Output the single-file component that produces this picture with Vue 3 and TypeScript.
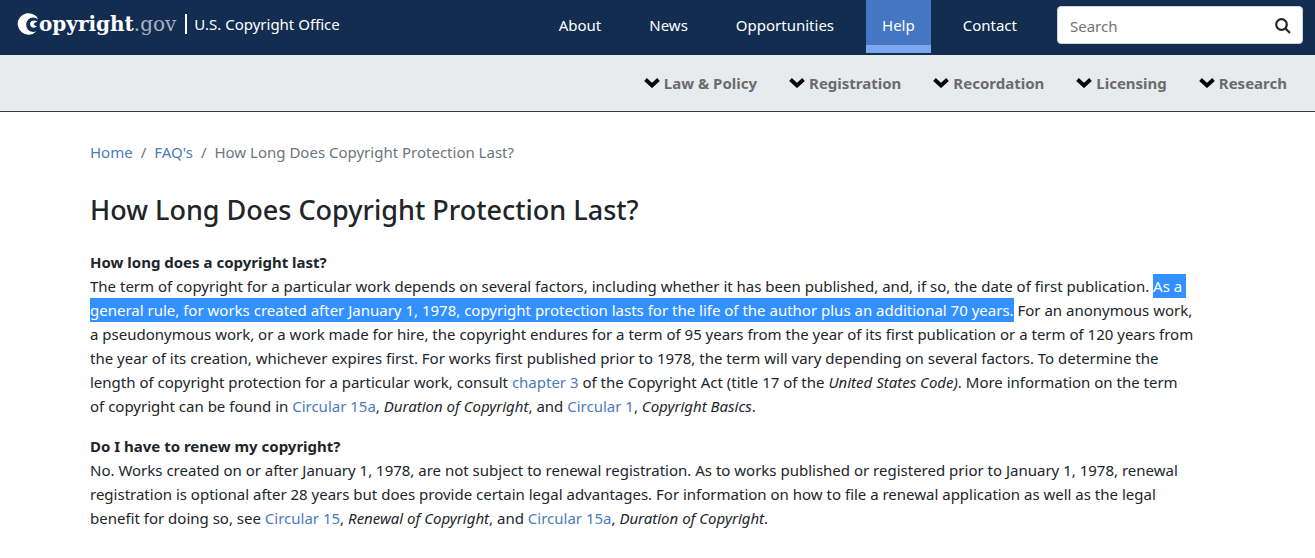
<script setup lang="ts">
interface NavItem {
  label: string
  active?: boolean
}

const mainNav: NavItem[] = [
  { label: 'About' },
  { label: 'News' },
  { label: 'Opportunities' },
  { label: 'Help', active: true },
  { label: 'Contact' },
]

const subNav: string[] = ['Law & Policy', 'Registration', 'Recordation', 'Licensing', 'Research']
</script>

<template>
  <div class="page">
    <header class="topbar">
      <a class="brand" href="#">
        <span class="wordmark">
          <svg class="mark" viewBox="0 0 22 22" aria-hidden="true">
            <path d="M19.500 18.300A10.800 10.800 0 1 1 17.500 2C19 2.800 20.500 4.500 21 6.500C18.500 3.800 14 3.600 11.300 6.500C8.300 9.700 8.700 15 12 17.600C14.300 19.400 17.300 19.300 19.500 18.300Z" fill="#fff" />
            <path d="M20.500 8.500C18 6.700 13 7.200 13 11.100C13 15 17.500 15.600 20 13.600L18 12.400C16.500 12.300 16.500 10 18 9.800Z" fill="#fff" />
          </svg>
          <span class="word">opyright</span><span class="gov">.gov</span>
        </span>
        <span class="divider"></span>
        <span class="office">U.S. Copyright Office</span>
      </a>
      <nav class="main-nav" aria-label="Main">
        <a v-for="item in mainNav" :key="item.label" href="#" :class="{ active: item.active }">{{ item.label }}</a>
      </nav>
      <form class="search" role="search" @submit.prevent>
        <input type="text" placeholder="Search" aria-label="Search" />
        <button type="submit" aria-label="Submit search">
          <svg viewBox="0 0 16 16" aria-hidden="true">
            <circle cx="6.500" cy="6.500" r="5.300" />
            <path d="M10.500 10.500L15 15" />
          </svg>
        </button>
      </form>
    </header>

    <nav class="sub-nav" aria-label="Topics">
      <button v-for="label in subNav" :key="label" type="button">
        <svg viewBox="0 0 16 10" aria-hidden="true"><path d="M1.500 1.500L8 7.500L14.500 1.500" /></svg>
        {{ label }}
      </button>
    </nav>

    <main class="content">
      <nav class="crumbs" aria-label="Breadcrumb">
        <a href="#">Home</a><span>/</span><a href="#">FAQ's</a><span>/</span>How Long Does Copyright Protection Last?
      </nav>
      <h1>How Long Does Copyright Protection Last?</h1>
      <section>
        <h2>How long does a copyright last?</h2>
        <p>
          The term of copyright for a particular work depends on several factors, including whether it has been published, and, if so, the date of first publication.
          <mark>As a&nbsp;<br />general rule, for works created after January 1, 1978, copyright protection lasts for the life of the author plus an additional 70 years.</mark>
          For an anonymous work,<br />
          a pseudonymous work, or a work made for hire, the copyright endures for a term of 95 years from the year of its first publication or a term of 120 years from<br />
          the year of its creation, whichever expires first. For works first published prior to 1978, the term will vary depending on several factors. To determine the<br />
          length of copyright protection for a particular work, consult
          <a href="#">chapter 3</a> of the Copyright Act (title 17 of the <em>United States Code)</em>. More information on the term<br />
          of copyright can be found in
          <a href="#">Circular 15a</a>, <em>Duration of Copyright</em>, and <a href="#">Circular 1</a>, <em>Copyright Basics</em>.
        </p>
      </section>
      <section>
        <h2>Do I have to renew my copyright?</h2>
        <p>
          No. Works created on or after January 1, 1978, are not subject to renewal registration. As to works published or registered prior to January 1, 1978, renewal<br />
          registration is optional after 28 years but does provide certain legal advantages. For information on how to file a renewal application as well as the legal<br />
          benefit for doing so, see
          <a href="#">Circular 15</a>, <em>Renewal of Copyright</em>, and <a href="#">Circular 15a</a>, <em>Duration of Copyright</em>.
        </p>
      </section>
    </main>
  </div>
</template>

<style>
body {
  margin: 0;
  background: #fff;
}
</style>

<style scoped>
.page {
  font-family: "Noto Sans", "Open Sans", sans-serif;
  font-size: 15px;
  line-height: 24px;
  color: #212529;
}

a {
  color: #4a7bbd;
  text-decoration: none;
}

.topbar {
  display: flex;
  align-items: flex-start;
  height: 55px;
  padding: 0 12px 0 17px;
  background: #132d50;
}

.brand {
  display: flex;
  align-items: center;
  height: 48px;
  margin-right: auto;
  color: #fff;
  white-space: nowrap;
}

.wordmark {
  display: flex;
  align-items: center;
  font-family: "DejaVu Serif", serif;
  font-size: 20px;
}

.mark {
  width: 22px;
  height: 22px;
}

.word {
  font-weight: 700;
}

.gov {
  color: #a8b1c0;
}

.divider {
  width: 2px;
  height: 20px;
  margin: 0 7px 0 9px;
  background: #fff;
}

.main-nav {
  display: flex;
  gap: 16px;
  margin-right: 24px;
}

.main-nav a {
  box-sizing: border-box;
  height: 53px;
  padding: 13px 16px 0;
  color: #fff;
  border-bottom: 8px solid transparent;
}

.main-nav .active {
  background: #4476c4;
  border-bottom-color: #7ba6f0;
}

.search {
  display: flex;
  box-sizing: border-box;
  width: 246px;
  height: 38px;
  margin-top: 6px;
  background: #fff;
  border: 1px solid #ced4da;
  border-radius: 4px;
}

.search input {
  flex: 1;
  min-width: 0;
  padding: 2px 12px 0;
  font: inherit;
  color: #495057;
  background: none;
  border: 0;
}

.search input::placeholder {
  color: #6c757d;
  opacity: 1;
}

.search button {
  padding: 2px 11px 0;
  background: none;
  border: 0;
}

.search svg {
  display: block;
  width: 16px;
  height: 16px;
  fill: none;
  stroke: #212529;
  stroke-width: 2.200;
}

.sub-nav {
  display: flex;
  justify-content: flex-end;
  gap: 32px;
  padding: 16px 28px;
  background: #e8ebee;
  border-bottom: 1px solid #343a40;
}

.sub-nav button {
  display: flex;
  align-items: center;
  gap: 4px;
  padding: 0;
  font: inherit;
  font-weight: 700;
  color: #6a6b6d;
  background: none;
  border: 0;
}

.sub-nav svg {
  width: 16px;
  height: 10px;
  fill: none;
  stroke: #000;
  stroke-width: 3.800;
}

.content {
  padding: 28px 90px 0;
}

.crumbs {
  color: #6c757d;
}

.crumbs span {
  margin: 0 8px;
}

h1 {
  margin: 28px 0 22px;
  font-size: 27px;
  font-weight: 500;
  line-height: 36px;
}

h2 {
  margin: 0;
  font-size: 15px;
  font-weight: 700;
  line-height: 24px;
}

p {
  margin: 0 0 16px;
}

mark {
  padding: 2px 0;
  color: #fff;
  background: #3390ff;
}
</style>
